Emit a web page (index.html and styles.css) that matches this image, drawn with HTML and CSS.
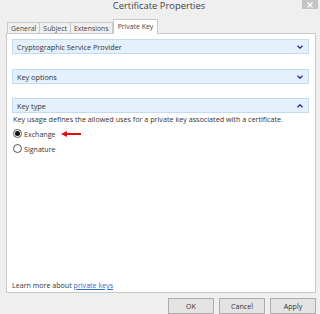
FILE: index.html
```html
<!DOCTYPE html>
<html>
<head>
<meta charset="utf-8">
<link rel="stylesheet" href="styles.css">
</head>
<body>
<div class="window">
  <div class="titlebar">
    <div class="title">Certificate Properties</div>
    <div class="close">
      <svg width="6" height="6" viewBox="0 0 6 6"><path d="M0.5 0.5 L5.5 5.5 M5.5 0.5 L0.5 5.5" stroke="#fff" stroke-width="1.2"/></svg>
    </div>
  </div>
  <div class="tabs">
    <div class="tab">General</div>
    <div class="tab">Subject</div>
    <div class="tab">Extensions</div>
    <div class="tab active">Private Key</div>
  </div>
  <div class="panel">
    <div class="bar">
      <span>Cryptographic Service Provider</span>
      <svg class="chev" width="6" height="4" viewBox="0 0 6 4"><path d="M0.5 0.8 L3 3.2 L5.5 0.8" fill="none" stroke="#1a2f8f" stroke-width="1.3"/></svg>
    </div>
    <div class="bar gap2">
      <span>Key options</span>
      <svg class="chev" width="6" height="4" viewBox="0 0 6 4"><path d="M0.5 0.8 L3 3.2 L5.5 0.8" fill="none" stroke="#1a2f8f" stroke-width="1.3"/></svg>
    </div>
    <div class="bar gap3">
      <span>Key type</span>
      <svg class="chev" width="6" height="4" viewBox="0 0 6 4"><path d="M0.5 3.2 L3 0.8 L5.5 3.2" fill="none" stroke="#1a2f8f" stroke-width="1.3"/></svg>
    </div>
    <div class="desc">Key usage defines the allowed uses for a private key associated with a certificate.</div>
    <div class="radio-row first">
      <span class="radio checked"></span><span class="rlabel">Exchange</span>
      <svg class="arrow" width="20" height="6" viewBox="0 0 20 6"><path d="M0 3 L6 0 L6 2 L20 2 L20 4 L6 4 L6 6 Z" fill="#e01010"/></svg>
    </div>
    <div class="radio-row">
      <span class="radio"></span><span class="rlabel">Signature</span>
    </div>
    <div class="learn">Learn more about <a href="#">private keys</a></div>
  </div>
  <div class="buttons">
    <div class="btn">OK</div>
    <div class="btn">Cancel</div>
    <div class="btn">Apply</div>
  </div>
</div>
</body>
</html>
```
FILE: styles.css
```css
html, body {
  margin: 0;
  padding: 0;
}
body {
  width: 320px;
  height: 314px;
  overflow: hidden;
  background: #efefef;
  font-family: "Open Sans", "Noto Sans", sans-serif;
  font-size: 7.1px;
  color: #333;
}
.window {
  display: flex;
  flex-direction: column;
  height: 314px;
}
.titlebar {
  height: 18px;
  display: grid;
  grid-template-columns: 1fr auto;
  align-items: start;
}
.title {
  font-size: 9.4px;
  color: #444;
  text-align: center;
  padding-left: 16px;
  line-height: 12px;
}
.close {
  width: 16px;
  height: 9px;
  background: #c4c4c4;
  margin-right: 2px;
  display: flex;
  align-items: center;
  justify-content: center;
}
.tabs {
  display: flex;
  align-items: flex-end;
  margin-left: 7px;
  height: 15px;
}
.tab {
  height: 11px;
  line-height: 11px;
  padding: 0 3px;
  border: 1px solid #c9c9c9;
  border-bottom: none;
  border-right: none;
  background: #f0f0f0;
  color: #444;
  box-sizing: border-box;
  font-size: 6.9px;
}
.tab:nth-child(3) {
  border-right: 1px solid #c9c9c9;
}
.tab.active {
  height: 15px;
  line-height: 13px;
  background: #fff;
  padding: 0 4px;
  border: 1px solid #c9c9c9;
  border-bottom: none;
  margin-bottom: -1px;
  position: relative;
  z-index: 1;
}
.panel {
  margin: 0 4px 0 6px;
  height: 260px;
  background: #fff;
  border: 1px solid #c9c9c9;
  box-sizing: border-box;
  padding: 5px 6px 0 5px;
  display: flex;
  flex-direction: column;
}
.bar {
  height: 15px;
  box-sizing: border-box;
  background: #e4f0fb;
  border: 1px solid #c2dbf1;
  display: flex;
  align-items: center;
  justify-content: space-between;
  padding: 0 5px 0 4px;
  font-size: 7.3px;
  color: #333;
}
.gap2 { margin-top: 15px; }
.gap3 { margin-top: 14px; }
.desc {
  margin-top: 1px;
  line-height: 10px;
  white-space: nowrap;
  padding-left: 1px;
  font-size: 7.2px;
}
.radio-row {
  display: flex;
  align-items: center;
  height: 11px;
  margin-top: 4px;
  padding-left: 1px;
}
.radio-row.first { margin-top: 4px; }
.radio {
  width: 9px;
  height: 9px;
  box-sizing: border-box;
  border: 1px solid #555;
  border-radius: 50%;
  background: #fff;
  display: flex;
  align-items: center;
  justify-content: center;
}
.radio.checked::after {
  content: "";
  width: 5px;
  height: 5px;
  border-radius: 50%;
  background: #111;
}
.rlabel {
  margin-left: 2px;
}
.arrow {
  margin-left: 5px;
}
.learn {
  margin-top: auto;
  margin-bottom: 2px;
  line-height: 10px;
  padding-left: 0;
}
.learn a {
  color: #2a6fc9;
  text-decoration: underline;
}
.buttons {
  display: flex;
  justify-content: flex-end;
  gap: 5px;
  margin-top: 5px;
  margin-right: 4px;
}
.btn {
  width: 46px;
  height: 16px;
  box-sizing: border-box;
  border: 1px solid #adadad;
  background: #e3e3e3;
  text-align: center;
  line-height: 14px;
  color: #333;
}
```
